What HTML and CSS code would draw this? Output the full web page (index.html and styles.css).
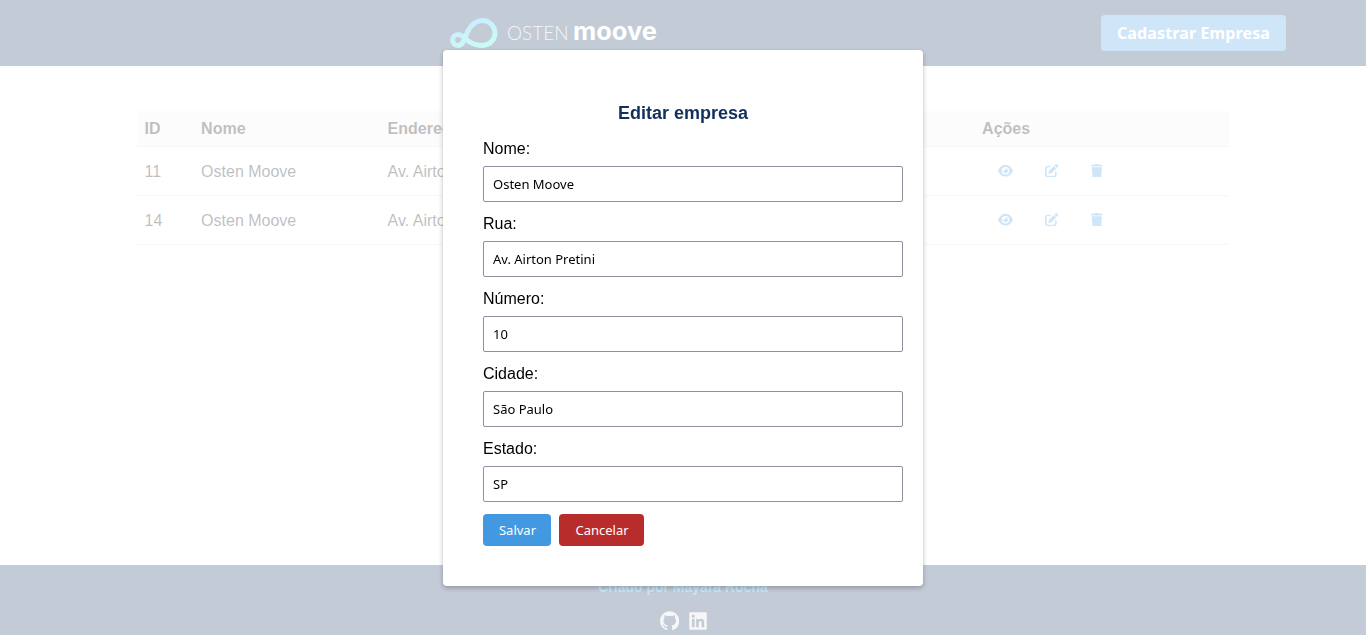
FILE: index.html
```html
<!DOCTYPE html>
<html lang="pt-BR">
<head>
<meta charset="utf-8">
<title>Osten Moove</title>
<link rel="stylesheet" href="styles.css">
</head>
<body>
<svg class="sprite" aria-hidden="true">
  <symbol id="eye" viewBox="0 0 576 512"><path d="M288 32c-80.8 0-145.5 36.8-192.6 80.6C48.6 156 17.3 208 2.5 243.7c-3.3 7.9-3.3 16.7 0 24.6C17.3 304 48.6 356 95.4 399.4C142.5 443.2 207.2 480 288 480s145.5-36.8 192.6-80.6c46.8-43.5 78.1-95.4 93-131.1c3.3-7.9 3.3-16.7 0-24.6c-14.9-35.7-46.2-87.7-93-131.1C433.5 68.8 368.8 32 288 32zM144 256a144 144 0 1 1 288 0 144 144 0 1 1 -288 0zm144-64c0 35.3-28.7 64-64 64c-7.1 0-13.9-1.2-20.3-3.3c-5.5-1.8-11.9 1.6-11.7 7.4c.3 6.9 1.3 13.8 3.2 20.7c13.7 51.2 66.4 81.6 117.6 67.9s81.6-66.4 67.9-117.6c-11.1-41.5-47.8-69.4-88.6-71.1c-5.8-.2-9.2 6.1-7.4 11.7c2.1 6.4 3.3 13.2 3.3 20.3z"/></symbol>
  <symbol id="edit" viewBox="0 0 512 512"><path d="M471.6 21.7c-21.9-21.9-57.3-21.9-79.2 0L362.3 51.7l97.9 97.9 30.1-30.1c21.9-21.9 21.9-57.3 0-79.2L471.6 21.7zm-299.2 220c-6.1 6.1-10.8 13.6-13.5 21.9l-29.6 88.8c-2.9 8.6-.6 18.1 5.8 24.6s15.9 8.7 24.6 5.8l88.8-29.6c8.2-2.7 15.7-7.4 21.9-13.5L437.7 172.3 339.7 74.3 172.4 241.7zM96 64C43 64 0 107 0 160V416c0 53 43 96 96 96H352c53 0 96-43 96-96V320c0-17.7-14.3-32-32-32s-32 14.3-32 32v96c0 17.7-14.3 32-32 32H96c-17.7 0-32-14.3-32-32V160c0-17.7 14.3-32 32-32h96c17.7 0 32-14.3 32-32s-14.3-32-32-32H96z"/></symbol>
  <symbol id="trash" viewBox="0 0 448 512"><path d="M135.2 17.7L128 32H32C14.3 32 0 46.3 0 64S14.3 96 32 96H416c17.7 0 32-14.3 32-32s-14.3-32-32-32H320l-7.2-14.3C307.4 6.8 296.3 0 284.2 0H163.8c-12.1 0-23.2 6.8-28.6 17.7zM416 128H32L53.2 467c1.6 25.3 22.6 45 47.9 45H346.9c25.3 0 46.3-19.7 47.9-45L416 128z"/></symbol>
</svg>

<div class="page">
  <header class="header">
    <svg class="logo" viewBox="0 0 210 34" role="img" aria-label="Osten Moove">
      <defs>
        <linearGradient id="brand" gradientUnits="userSpaceOnUse" x1="22" y1="3" x2="32" y2="32">
          <stop offset="0" stop-color="#30b4ff"/>
          <stop offset="1" stop-color="#30f0d2"/>
        </linearGradient>
      </defs>
      <path class="logo-mark" d="M2.6 24A5.5 5.5 0 0 1 8 18.5C12.5 18.5 15 23 20 26.2C24 28.7 28 29.5 32.5 29.5A12.5 12.5 0 0 0 32.5 4.5C25 4.5 21.500 9 18.500 14C15 20 14 29.500 8 29.500A5.500 5.500 0 0 1 2.600 24Z"/>
      <text class="logo-thin" x="57" y="24" textLength="61.500" lengthAdjust="spacingAndGlyphs">OSTEN</text>
      <text class="logo-bold" x="123" y="23.800" textLength="84" lengthAdjust="spacingAndGlyphs">moove</text>
    </svg>
    <button class="register">Cadastrar Empresa</button>
  </header>

  <main class="content">
    <table class="companies">
      <colgroup><col class="col-id"><col class="col-name"><col class="col-address"><col class="col-actions"></colgroup>
      <thead>
        <tr><th>ID</th><th>Nome</th><th>Endereço</th><th>Ações</th></tr>
      </thead>
      <tbody>
        <tr>
          <td>11</td><td>Osten Moove</td><td>Av. Airton Pretini</td>
          <td><div class="actions"><svg class="icon eye"><use href="#eye"/></svg><svg class="icon edit"><use href="#edit"/></svg><svg class="icon trash"><use href="#trash"/></svg></div></td>
        </tr>
        <tr>
          <td>14</td><td>Osten Moove</td><td>Av. Airton Pretini</td>
          <td><div class="actions"><svg class="icon eye"><use href="#eye"/></svg><svg class="icon edit"><use href="#edit"/></svg><svg class="icon trash"><use href="#trash"/></svg></div></td>
        </tr>
      </tbody>
    </table>
  </main>

  <footer class="footer">
    <p class="credit">Criado por Mayara Rocha</p>
    <div class="social">
      <svg class="github" viewBox="0 0 16 16"><path d="M8 0C3.58 0 0 3.58 0 8c0 3.54 2.29 6.53 5.47 7.59.4.07.55-.17.55-.38 0-.19-.01-.82-.01-1.49-2.01.37-2.53-.49-2.69-.94-.09-.23-.48-.94-.82-1.13-.28-.15-.68-.52-.01-.53.63-.01 1.08.58 1.23.82.72 1.21 1.87.87 2.33.66.07-.52.28-.87.51-1.07-1.78-.2-3.64-.89-3.64-3.95 0-.87.31-1.59.82-2.15-.08-.2-.36-1.02.08-2.12 0 0 .67-.21 2.2.82.64-.18 1.32-.27 2-.27s1.36.09 2 .27c1.53-1.04 2.2-.82 2.2-.82.44 1.1.16 1.92.08 2.12.51.56.82 1.27.82 2.15 0 3.07-1.87 3.75-3.65 3.95.29.25.54.73.54 1.48 0 1.07-.01 1.93-.01 2.2 0 .21.15.46.55.38A8.01 8.01 0 0 0 16 8c0-4.42-3.58-8-8-8z"/></svg>
      <svg class="linkedin" viewBox="0 0 448 512"><path d="M416 32H31.9C14.3 32 0 46.5 0 64.3v383.4C0 465.5 14.3 480 31.9 480H416c17.6 0 32-14.5 32-32.3V64.3c0-17.8-14.4-32.3-32-32.3zM135.4 416H69V202.2h66.5V416zm-33.200-243c-21.300 0-38.500-17.300-38.500-38.500S80.900 96 102.200 96c21.200 0 38.500 17.300 38.500 38.500 0 21.300-17.200 38.500-38.500 38.500zm282.100 243h-66.400V312c0-24.800-.5-56.700-34.500-56.700-34.600 0-39.900 27-39.900 54.900V416h-66.400V202.200h63.700v29.200h.9c8.900-16.800 30.600-34.500 62.200-34.500 66.500 0 78.800 43.800 78.800 100.900V416z"/></svg>
    </div>
  </footer>
</div>

<div class="overlay">
  <form class="modal">
    <h2 class="title">Editar empresa</h2>
    <label class="field">Nome:<input class="input" value="Osten Moove"></label>
    <label class="field">Rua:<input class="input" value="Av. Airton Pretini"></label>
    <label class="field">Número:<input class="input" value="10"></label>
    <label class="field">Cidade:<input class="input" value="São Paulo"></label>
    <label class="field">Estado:<input class="input" value="SP"></label>
    <div class="buttons">
      <button type="button" class="button save">Salvar</button>
      <button type="button" class="button cancel">Cancelar</button>
    </div>
  </form>
</div>
</body>
</html>
```

FILE: styles.css
```css
* { box-sizing: border-box; }

body {
  margin: 0;
  overflow: hidden;
  font: 16px "Liberation Sans", Arial, sans-serif;
  color: #000;
}

.sprite { display: none; }

.page {
  display: flex;
  flex-direction: column;
  height: 635px;
}

.header {
  display: flex;
  justify-content: space-between;
  align-items: center;
  height: 66px;
  padding: 0 80px 0 450px;
  background: #12305c;
}

.logo { width: 210px; height: 34px; }
.logo-mark { fill: none; stroke: url(#brand); stroke-width: 5; }
.logo-thin { font: 300 20px Lato, sans-serif; fill: #fff; fill-opacity: .85; }
.logo-bold { font: 700 24.5px Inter, sans-serif; fill: #fff; }

.register {
  width: 185px;
  height: 36px;
  padding: 0;
  border: 0;
  border-radius: 4px;
  background: #4299e1;
  color: #fff;
  font: 700 16px "Noto Sans", sans-serif;
  letter-spacing: .13px;
}

.content {
  flex: 1;
  padding-top: 45px;
}

.companies {
  width: 80%;
  margin: 0 auto;
  table-layout: fixed;
  border-collapse: separate;
  border-spacing: 0;
}
.col-id { width: 56.5px; }
.col-name { width: 186.5px; }
.col-address { width: 594.5px; }
.companies th,
.companies td {
  padding: 0 8px;
  border-bottom: 1px solid #ddd;
  text-align: left;
}
.companies th { height: 36px; background: #f2f2f2; }
.companies td { height: 49px; padding-top: 2px; }

.actions {
  display: flex;
  align-items: center;
  gap: 32px;
  padding: 0 0 2px 16px;
}
.icon { height: 13.33px; fill: #4299e1; }
.eye { width: 15px; }
.edit { width: 13.33px; }
.trash { width: 11.67px; margin-left: .6px; }

.footer {
  height: 70px;
  padding-top: 14px;
  background: #12305c;
}
.credit {
  margin: 0;
  color: #16a8f5;
  font-size: 14px;
  font-weight: 700;
  line-height: 16px;
  text-align: center;
}
.social {
  display: flex;
  justify-content: center;
  align-items: center;
  gap: 9.6px;
  margin-top: 16px;
  padding-left: 1px;
  fill: #dcdcdc;
}
.github { width: 19.4px; height: 20px; }
.linkedin { width: 18px; height: 20px; }

.overlay {
  position: fixed;
  inset: 0;
  display: flex;
  justify-content: center;
  align-items: center;
  background: rgba(255, 255, 255, .75);
}

.modal {
  display: flex;
  flex-direction: column;
  gap: 12px;
  width: 480px;
  height: 536px;
  margin-top: 1px;
  padding: 52px 20px 40px 40px;
  border-radius: 4px;
  background: #fff;
  box-shadow: 0 2px 5px rgba(0, 0, 0, .26);
}
.title {
  margin: 0 20px 3px 0;
  color: #12305c;
  font-size: 18px;
  line-height: 22px;
  text-align: center;
}
.field {
  display: flex;
  flex-direction: column;
  gap: 7px;
  line-height: 20px;
}
.input {
  width: 420px;
  height: 36px;
  padding: 0 9px;
  border: 1px solid #8f8f9d;
  border-radius: 2px;
  background: #fff;
  color: #000;
  font: 13px "Noto Sans", sans-serif;
}
.buttons { display: flex; gap: 8px; }
.button {
  height: 32px;
  padding: 0 0 0 1px;
  border: 0;
  border-radius: 4px;
  color: #fff;
  font: 13px "Noto Sans", sans-serif;
}
.save { width: 68px; background: #4299e1; }
.cancel { width: 85px; background: #b92c2c; }
```
